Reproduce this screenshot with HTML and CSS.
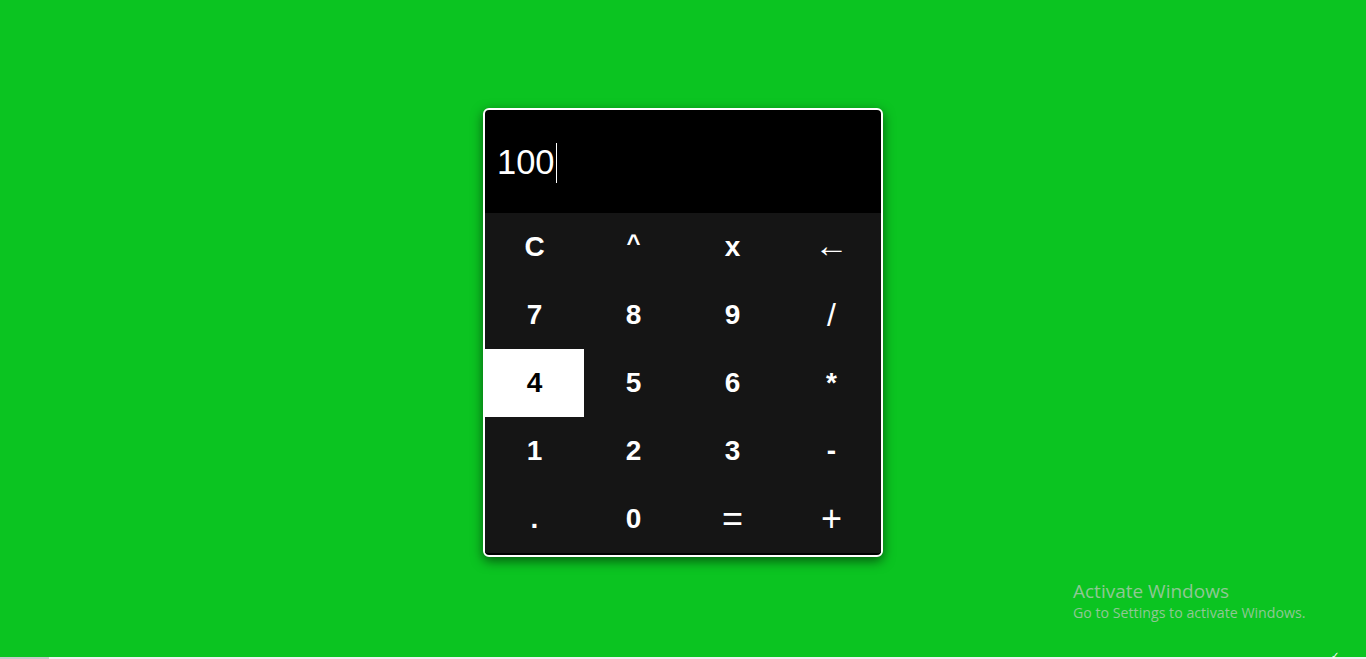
FILE: index.html
```html
<!DOCTYPE html>
<html lang="en">
<head>
    <meta charset="UTF-8">
    <meta name="viewport" content="width=device-width, initial-scale=1.0">
    <title>Calculator</title>
    <link rel="stylesheet" href="styles.css">
</head>
<body>
    <main class="stage">
        <div class="calculator">
            <div class="display"><span class="value">100</span><span class="caret"></span></div>
            <div class="keys">
                <button class="key">C</button>
                <button class="key small">^</button>
                <button class="key">x</button>
                <button class="key thin arrow">&larr;</button>

                <button class="key">7</button>
                <button class="key">8</button>
                <button class="key">9</button>
                <button class="key thin slash">/</button>

                <button class="key active">4</button>
                <button class="key">5</button>
                <button class="key">6</button>
                <button class="key">*</button>

                <button class="key">1</button>
                <button class="key">2</button>
                <button class="key">3</button>
                <button class="key">-</button>

                <button class="key">.</button>
                <button class="key">0</button>
                <button class="key thin wide">=</button>
                <button class="key thin wide">+</button>
            </div>
        </div>
    </main>
    <div class="scrollbar"><span class="thumb"></span><span class="tick">&#10003;</span></div>

    <div class="watermark">
        <div class="wm-title">Activate Windows</div>
        <div class="wm-sub">Go to Settings to activate Windows.</div>
    </div>
</body>
</html>
```

FILE: styles.css
```css
html, body { margin: 0; padding: 0; height: 100%; }
body { font-family: "Liberation Sans", Arial, sans-serif; background-color: #0bc421; display: flex; flex-direction: column; overflow: hidden; }

.stage { flex: 1; display: flex; justify-content: center; align-items: center; padding-top: 8px; }

.calculator { width: 396px; background-color: #000; border: 2px solid #fff; border-radius: 6px; overflow: hidden; box-shadow: 0 4px 12px rgba(0, 0, 0, 0.55); padding-bottom: 2px; }

.display { height: 103px; display: flex; align-items: center; padding-left: 12px; color: #fff; font-size: 34.5px; padding-top: 2px; box-sizing: border-box; }
.display .caret { display: inline-block; width: 1px; height: 40px; background-color: #fff; margin-left: 1px; }

.keys { display: grid; grid-template-columns: repeat(4, 99px); grid-auto-rows: 68px; background-color: #151515; }
.key { background: none; border: none; color: #fff; font-family: "Liberation Sans", Arial, sans-serif; font-size: 28px; font-weight: bold; padding: 0; cursor: pointer; }
.key.small { font-size: 24px; padding-bottom: 8px; }
.key.thin { font-weight: normal; font-size: 30px; }
.key.arrow { font-size: 34px; padding-bottom: 4px; }
.key.slash { font-size: 32px; }
.key.wide { font-size: 36px; }
.key.active { background-color: #fff; color: #000; }

.scrollbar { height: 2px; background-color: #f0f0f0; position: relative; }
.scrollbar .thumb { display: block; width: 49px; height: 2px; background-color: #c8c8c8; }
.scrollbar .tick { position: absolute; left: 1331px; top: -6px; font-size: 10px; color: #fff; line-height: 1; }

.watermark { position: absolute; left: 1073px; top: 579px; color: #8fc895; font-family: "Open Sans", "Noto Sans", sans-serif; }
.wm-title { font-size: 19px; line-height: 24px; }
.wm-sub { font-size: 14.2px; line-height: 20px; }
```
